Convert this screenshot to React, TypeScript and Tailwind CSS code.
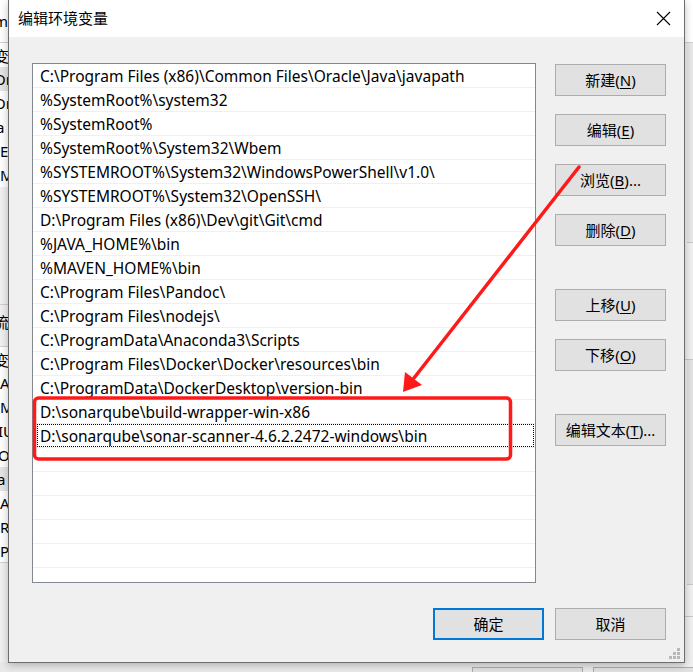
import React from "react";

const paths = [
  "C:\\Program Files (x86)\\Common Files\\Oracle\\Java\\javapath",
  "%SystemRoot%\\system32",
  "%SystemRoot%",
  "%SystemRoot%\\System32\\Wbem",
  "%SYSTEMROOT%\\System32\\WindowsPowerShell\\v1.0\\",
  "%SYSTEMROOT%\\System32\\OpenSSH\\",
  "D:\\Program Files (x86)\\Dev\\git\\Git\\cmd",
  "%JAVA_HOME%\\bin",
  "%MAVEN_HOME%\\bin",
  "C:\\Program Files\\Pandoc\\",
  "C:\\Program Files\\nodejs\\",
  "C:\\ProgramData\\Anaconda3\\Scripts",
  "C:\\Program Files\\Docker\\Docker\\resources\\bin",
  "C:\\ProgramData\\DockerDesktop\\version-bin",
  "D:\\sonarqube\\build-wrapper-win-x86",
  "D:\\sonarqube\\sonar-scanner-4.6.2.2472-windows\\bin",
];

const font = { fontFamily: "'Noto Sans', 'Noto Sans CJK SC', sans-serif" };

function Btn({ label, hot, rest, primary }: { label: string; hot?: string; rest?: string; primary?: boolean }) {
  return (
    <button
      className={`w-[111px] h-[32px] bg-[#e1e1e1] text-[15px] text-black flex items-center justify-center ${
        primary ? "border-2 border-[#0078d7]" : "border border-[#adadad]"
      }`}
    >
      <span>
        {label}
        {hot && (
          <>
            (<span className="underline underline-offset-2">{hot}</span>){rest}
          </>
        )}
      </span>
    </button>
  );
}

export default function App() {
  const empty = Array.from({ length: 6 });
  return (
    <div style={font} className="relative w-[693px] h-[672px] overflow-hidden bg-[#e9e9e9] leading-none">
      {/* background window, left side */}
      <div className="absolute left-0 top-0 w-[9px] h-[662px] bg-white text-[15px] text-black overflow-hidden flex flex-col">
        <div className="h-[43px] border-b border-[#d0d0d0] pt-[14px] -ml-[6px]">m</div>
        <div className="h-[24px] pt-[6px] -ml-[6px]">变</div>
        <div className="h-[24px] pt-[5px] bg-[#e5e5e5] -ml-[6px]">Or</div>
        <div className="h-[24px] pt-[5px] -ml-[6px]">Or</div>
        <div className="h-[24px] pt-[5px] -ml-[4px]">a</div>
        <div className="h-[24px] pt-[5px]">E</div>
        <div className="h-[24px] pt-[5px]">M</div>
        <div className="h-[118px] bg-[#f0f0f0] border-b border-[#d0d0d0]" />
        <div className="h-[42px] pt-[10px] -ml-[6px] border-b border-[#d0d0d0] bg-[#f0f0f0]">流</div>
        <div className="h-[24px] pt-[6px] -ml-[6px]">变</div>
        <div className="h-[24px] pt-[5px]">A</div>
        <div className="h-[24px] pt-[5px]">M</div>
        <div className="h-[24px] pt-[5px] -ml-[2px]">IU</div>
        <div className="h-[24px] pt-[5px] -ml-[2px]">OS</div>
        <div className="h-[24px] pt-[5px] -ml-[3px] bg-[#e5e5e5]">a</div>
        <div className="h-[24px] pt-[5px]">A</div>
        <div className="h-[24px] pt-[5px]">R</div>
        <div className="h-[24px] pt-[5px] border-b border-[#d0d0d0]">P</div>
        <div className="flex-1 bg-[#f0f0f0]" />
      </div>

      {/* background window, right side */}
      <div className="absolute right-0 top-0 w-[9px] h-[672px] bg-[#f0f0f0] flex flex-col">
        <div className="h-[43px] bg-white border-b border-[#d0d0d0]" />
        <div className="h-[200px] ml-[3px] bg-[#e8e8e8] border-b border-[#c8c8c8]" />
        <div className="h-[117px] border-b border-[#c8c8c8]" />
        <div className="h-[225px] ml-[3px] bg-[#e2e2e2] border-b border-[#c8c8c8]" />
        <div className="h-[32px] border-b border-[#c8c8c8]" />
        <div className="flex-1" />
      </div>

      {/* background window buttons below dialog */}
      <div className="absolute left-[472px] top-[667px] w-[111px] h-[10px] border border-[#adadad] bg-[#e1e1e1]" />
      <div className="absolute left-[593px] top-[667px] w-[111px] h-[10px] border border-[#adadad] bg-[#e1e1e1]" />

      {/* dialog window */}
      <div className="absolute left-[8px] top-0 w-[677px] h-[663px] bg-[#f0f0f0] border-x border-b border-[#6d6d6d] shadow-[0_2px_8px_rgba(0,0,0,0.25)] flex flex-col">
        <div className="h-[37px] bg-white flex items-center justify-between pl-[9px] pr-[13px]">
          <span className="text-[15px] text-black">编辑环境变量</span>
          <svg width="15" height="15" viewBox="0 0 15 15">
            <path d="M1 1 L14 14 M14 1 L1 14" stroke="#000" strokeWidth="1.1" />
          </svg>
        </div>

        <div className="flex-1 relative pt-[26px] pl-[23px] pr-[18px] flex gap-[19px]">
          {/* list */}
          <div className="w-[504px] h-[520px] bg-white border border-[#828790] overflow-hidden">
            {paths.map((p, i) => (
              <div key={i} className="h-[24px] border-b border-[#f0f0f0] flex items-stretch text-[15.5px] text-black">
                {i === paths.length - 1 ? (
                  <div className="flex-1 ml-[4px] mr-[1px] pl-[2px] pt-[2px] border border-dotted border-black flex items-center">
                    {p}
                  </div>
                ) : (
                  <div className="pl-[7px] pt-[2px] flex items-center">{p}</div>
                )}
              </div>
            ))}
            {empty.map((_, i) => (
              <div key={i} className="h-[24px] border-b border-[#f0f0f0]" />
            ))}
          </div>

          {/* buttons */}
          <div className="flex flex-col pt-[1px]">
            <Btn label="新建" hot="N" />
            <div className="h-[18px]" />
            <Btn label="编辑" hot="E" />
            <div className="h-[18px]" />
            <Btn label="浏览" hot="B" rest="..." />
            <div className="h-[18px]" />
            <Btn label="删除" hot="D" />
            <div className="h-[43px]" />
            <Btn label="上移" hot="U" />
            <div className="h-[18px]" />
            <Btn label="下移" hot="O" />
            <div className="h-[43px]" />
            <Btn label="编辑文本" hot="T" rest="..." />
          </div>
        </div>

        <div className="h-[54px] flex justify-end items-start gap-[11px] pr-[18px]">
          <Btn label="确定" primary />
          <Btn label="取消" />
        </div>

        {/* resize grip */}
        <svg className="absolute right-[3px] bottom-[2px]" width="12" height="12" viewBox="0 0 12 12">
          <g fill="#b8b8b8">
            <rect x="8" y="0" width="3" height="3" />
            <rect x="4" y="4" width="3" height="3" />
            <rect x="8" y="4" width="3" height="3" />
            <rect x="0" y="8" width="3" height="3" />
            <rect x="4" y="8" width="3" height="3" />
            <rect x="8" y="8" width="3" height="3" />
          </g>
        </svg>
      </div>

      {/* annotation overlay */}
      <svg className="absolute left-0 top-0 pointer-events-none" width="693" height="672" viewBox="0 0 693 672">
        <rect x="34.5" y="398" width="476" height="61" rx="4" fill="none" stroke="#ff1a1a" strokeWidth="3.5" />
        <path d="M579 167 L414 378" stroke="#ff1a1a" strokeWidth="3.5" strokeLinecap="round" />
        <path d="M403 392 L405 372 L422 385 Z" fill="#ff1a1a" />
      </svg>
    </div>
  );
}
